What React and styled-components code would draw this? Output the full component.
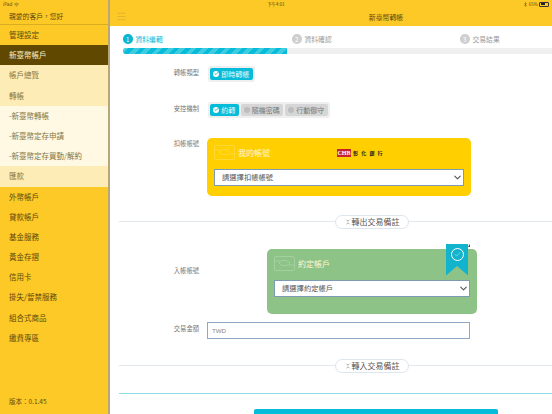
import React from 'react';
import styled, { createGlobalStyle } from 'styled-components';
import { Check, ChevronDown, Menu, Wifi, Bluetooth, ChevronsDownUp } from 'lucide-react';

const Global = createGlobalStyle`
  html, body { margin: 0; padding: 0; background: #fff; }
  * { box-sizing: border-box; }
  body {
    font-family: "Noto Sans CJK TC", "Noto Sans", sans-serif;
    color: #666;
    overflow: hidden;
  }
`;

const Page = styled.div`
  position: relative;
  display: flex;
  width: 552px;
  height: 414px;
  overflow: hidden;
`;

const StatusBar = styled.div`
  position: absolute;
  top: 0;
  left: 0;
  right: 0;
  height: 8px;
  padding: 0 3px;
  display: grid;
  grid-template-columns: 1fr auto 1fr;
  align-items: center;
  font-size: 4.5px;
  line-height: 8px;
  color: #5d4a10;
`;

const StatusLeft = styled.div`
  display: flex;
  align-items: center;
  gap: 2px;
`;

const StatusRight = styled.div`
  display: flex;
  align-items: center;
  justify-content: flex-end;
  gap: 1px;
`;

const Battery = styled.span`
  width: 10px;
  height: 5px;
  border: 0.5px solid #333;
  border-radius: 1px;
  padding: 0.5px;
  display: block;

  &::before {
    content: '';
    display: block;
    width: 65%;
    height: 100%;
    background: #222;
  }
`;

const Sidebar = styled.aside`
  width: 110px;
  flex: none;
  display: flex;
  flex-direction: column;
  padding-top: 8px;
  background: #fdc926;
  border-right: 2px solid #b9a77a;
`;

const Greeting = styled.div`
  height: 17px;
  padding-left: 9px;
  font-size: 6.8px;
  line-height: 16px;
  color: #5d4a10;
  border-bottom: 1px solid #d9ac22;
`;

const NavItem = styled.div`
  height: 20.2px;
  flex: none;
  padding-left: 9px;
  font-size: 7.5px;
  line-height: 20px;
  white-space: nowrap;
  color: ${(p) => (p.$level === 'active' ? '#fdf1cf' : p.$level === 'top' ? '#5d4a10' : '#85763f')};
  background: ${(p) =>
    p.$level === 'active' ? '#614800' : p.$level === 'open' ? '#feecb6' : p.$level === 'sub' ? '#fff8e3' : 'transparent'};
`;

const Version = styled.div`
  margin-top: auto;
  padding: 0 0 8px 9px;
  font-size: 6.5px;
  line-height: 10px;
  color: #5d4a10;
`;

const Main = styled.main`
  flex: 1;
  min-width: 0;
  display: flex;
  flex-direction: column;

  & > * {
    flex: none;
  }
`;

const Header = styled.header`
  position: relative;
  height: 26px;
  padding: 8px 0 0 110px;
  display: flex;
  align-items: center;
  justify-content: center;
  background: #fdc926;
  font-size: 6.9px;
  color: #5d4a10;
`;

const MenuButton = styled.span`
  position: absolute;
  left: 6px;
  top: 11px;
  display: flex;
  color: #c9a341;
`;

const Steps = styled.div`
  margin: 8px 0 0 13px;
  height: 10px;
  display: grid;
  grid-template-columns: 169px 168px 1fr;
`;

const Step = styled.div`
  display: flex;
  align-items: center;
  gap: 3px;
  font-size: 6.8px;
  color: ${(p) => (p.$active ? '#08b6d4' : '#9a9a9a')};
`;

const StepNumber = styled.span`
  width: 9.5px;
  height: 9.5px;
  border-radius: 50%;
  display: flex;
  align-items: center;
  justify-content: center;
  font-size: 6px;
  color: #fff;
  background: ${(p) => (p.$active ? '#08b6d4' : '#cfcfcf')};
`;

const Progress = styled.div`
  margin: 4px 0 0 13px;
  height: 5.5px;
  display: flex;
  background: #f0f0f0;
`;

const ProgressFill = styled.div`
  width: 164px;
  border-radius: 3px 0 0 3px;
  background: repeating-linear-gradient(-45deg, #06bcd8 0 4px, #3fcbe0 4px 8px);
`;

const Form = styled.div`
  margin-top: ${(p) => p.$top}px;
  padding-left: 9px;
  display: flex;
  flex-direction: column;
`;

const Row = styled.div`
  display: grid;
  grid-template-columns: 80px 1fr;
  column-gap: 8px;
  margin-top: ${(p) => p.$top || 0}px;
`;

const Label = styled.div`
  padding-top: ${(p) => p.$pad}px;
  text-align: right;
  font-size: 6.3px;
  line-height: 9px;
  color: #777;
`;

const PillGroup = styled.div`
  justify-self: start;
  display: flex;
  gap: 2px;
  height: 16px;
  margin-left: 1px;
  padding: 2px;
  border-radius: 3px;
  background: #efefef;
`;

const Pill = styled.div`
  display: flex;
  align-items: center;
  gap: 2px;
  height: 12.5px;
  padding: 0 3.25px;
  border-radius: 2px;
  font-size: 7px;
  white-space: nowrap;
  color: ${(p) => (p.$on ? '#e4f9fd' : '#777')};
  background: ${(p) => (p.$on ? '#06bcd8' : '#d6d6d6')};
`;

const Dot = styled.span`
  width: 6px;
  height: 6px;
  flex: none;
  border-radius: 50%;
  display: flex;
  align-items: center;
  justify-content: center;
  color: #06a7c4;
  background: ${(p) => (p.$on ? '#fff' : '#bdbdbd')};
`;

const Card = styled.div`
  position: relative;
  width: ${(p) => p.$width}px;
  height: ${(p) => p.$height}px;
  margin-left: ${(p) => p.$left || 0}px;
  padding: 7px 7px 0;
  border-radius: 5px;
  background: ${(p) => p.$bg};
`;

const CardHead = styled.div`
  display: flex;
  align-items: center;
  gap: 3px;
  height: 16px;
  margin-bottom: 8px;
  font-size: 8px;
  color: #fff6d8;
`;

const BankLogo = styled.div`
  margin-left: 64px;
  display: flex;
  align-items: center;
  gap: 2px;
`;

const BankMark = styled.span`
  width: 14px;
  height: 8px;
  display: flex;
  align-items: center;
  justify-content: center;
  font: 700 6px "Liberation Serif", serif;
  color: #fff;
  background: #c8222c;
`;

const BankName = styled.span`
  font-size: 5px;
  letter-spacing: 3.2px;
  font-weight: 700;
  color: #222;
`;

const SelectWrap = styled.div`
  position: relative;
  display: flex;
  color: #555;

  svg {
    position: absolute;
    right: 1px;
    top: 3px;
    pointer-events: none;
  }
`;

const Select = styled.select`
  appearance: none;
  width: 100%;
  height: 17px;
  padding: 0 7px;
  border: 1px solid #7f9bb3;
  border-radius: 0;
  background: #fff;
  font-family: inherit;
  font-size: 7.3px;
  color: #555;
`;

const Bookmark = styled.div`
  position: absolute;
  top: -5px;
  right: 9px;
  width: 22px;
  height: 32px;
  display: flex;
  justify-content: center;
  padding-top: 4px;
  color: #fff;
  background: #12b3cd;
  clip-path: polygon(0 0, 100% 0, 100% 100%, 50% 70%, 0 100%);
`;

const BookmarkFold = styled.span`
  position: absolute;
  top: -5px;
  right: 7px;
  width: 0;
  height: 0;
  border-style: solid;
  border-width: 0 0 3px 2px;
  border-color: transparent transparent #1d4a63 transparent;
`;

const BookmarkRing = styled.span`
  width: 13px;
  height: 13px;
  border: 0.7px solid #fff;
  border-radius: 50%;
  display: flex;
  align-items: center;
  justify-content: center;
`;

const Amount = styled.input`
  width: 263px;
  height: 17px;
  padding: 0 4px;
  border: 1px solid #8fa9c4;
  background: #fff;
  font-family: "Liberation Sans", sans-serif;
  font-size: 6.2px;
  outline: none;

  &::placeholder {
    color: #888;
  }
`;

const Divider = styled.div`
  display: flex;
  align-items: center;
  margin-top: ${(p) => p.$top}px;
  margin-left: 9px;
`;

const Line = styled.span`
  height: 1px;
  flex: ${(p) => (p.$left ? '0 0 216px' : '1')};
  background: #e3e8ee;
`;

const NotePill = styled.div`
  width: 74px;
  height: 14px;
  flex: none;
  border: 1px solid #dde5ee;
  border-radius: 7px;
  display: flex;
  align-items: center;
  justify-content: center;
  gap: 1px;
  font-size: 8px;
  color: #555;
  background: #fff;
`;

const BottomRule = styled.div`
  height: 1.5px;
  margin: 20px 0 0 9px;
  background: #8adbe6;
`;

const Submit = styled.button`
  width: 244px;
  height: 20px;
  margin: 15px 0 0 144px;
  border: none;
  border-radius: 2px 2px 0 0;
  background: #06bcd8;
`;

const CardIcon = () => (
  <svg width="21" height="15" viewBox="0 0 21 15" fill="none" stroke="#fff" strokeOpacity="0.35" strokeWidth="0.6">
    <rect x="0.5" y="0.5" width="20" height="14" rx="1.5" />
    <ellipse cx="10.5" cy="7" rx="5" ry="2.5" />
    <path d="M0.5 5H6M15 9H20.5" />
  </svg>
);

const subMenu = ['-新臺幣轉帳', '-新臺幣定存申請', '-新臺幣定存買動/解約'];
const lowerMenu = ['外幣帳戶', '貸款帳戶', '基金服務', '黃金存摺', '信用卡', '掛失/暫禁服務', '組合式商品', '繳費專區'];

export default function App() {
  return (
    <Page>
      <Global />
      <Sidebar>
        <Greeting>親愛的客戶，您好</Greeting>
        <NavItem $level="top">管理設定</NavItem>
        <NavItem $level="active">新臺幣帳戶</NavItem>
        <NavItem $level="open">帳戶總覽</NavItem>
        <NavItem $level="open">轉帳</NavItem>
        {subMenu.map((item) => (
          <NavItem key={item} $level="sub">{item}</NavItem>
        ))}
        <NavItem $level="open">匯款</NavItem>
        {lowerMenu.map((item) => (
          <NavItem key={item} $level="top">{item}</NavItem>
        ))}
        <Version>版本：0.1.45</Version>
      </Sidebar>

      <Main>
        <Header>
          <MenuButton><Menu size={11} strokeWidth={1.2} /></MenuButton>
          新臺幣轉帳
        </Header>
        <Steps>
          <Step $active><StepNumber $active>1</StepNumber>資料編輯</Step>
          <Step><StepNumber>2</StepNumber>資料確認</Step>
          <Step><StepNumber>3</StepNumber>交易結果</Step>
        </Steps>
        <Progress><ProgressFill /></Progress>

        <Form $top={12}>
          <Row>
            <Label $pad={2}>轉帳類型</Label>
            <PillGroup>
              <Pill $on><Dot $on><Check size={5} strokeWidth={4} /></Dot>即時轉帳</Pill>
            </PillGroup>
          </Row>
          <Row $top={20}>
            <Label $pad={2.5}>安控機制</Label>
            <PillGroup>
              <Pill $on><Dot $on><Check size={5} strokeWidth={4} /></Dot>約轉</Pill>
              <Pill><Dot />隨機密碼</Pill>
              <Pill><Dot />行動御守</Pill>
            </PillGroup>
          </Row>
          <Row $top={20}>
            <Label $pad={1.5}>扣帳帳號</Label>
            <Card $width={264} $height={58} $bg="#ffcf00">
              <CardHead>
                <CardIcon />
                我的帳號
                <BankLogo>
                  <BankMark>CHB</BankMark>
                  <BankName>彰化銀行</BankName>
                </BankLogo>
              </CardHead>
              <SelectWrap>
                <Select defaultValue="">
                  <option value="">請選擇扣帳帳號</option>
                </Select>
                <ChevronDown size={11} strokeWidth={2.4} />
              </SelectWrap>
            </Card>
          </Row>
        </Form>

        <Divider $top={19}>
          <Line $left />
          <NotePill><ChevronsDownUp size={6} />轉出交易備註</NotePill>
          <Line />
        </Divider>

        <Form $top={20}>
          <Row>
            <Label $pad={17.5}>入帳帳號</Label>
            <Card $width={210} $height={65} $left={60} $bg="#8dc386">
              <BookmarkFold />
              <Bookmark>
                <BookmarkRing><Check size={7} strokeWidth={1.5} /></BookmarkRing>
              </Bookmark>
              <CardHead>
                <CardIcon />
                約定帳戶
              </CardHead>
              <SelectWrap>
                <Select defaultValue="">
                  <option value="">請選擇約定帳戶</option>
                </Select>
                <ChevronDown size={11} strokeWidth={2.4} />
              </SelectWrap>
            </Card>
          </Row>
          <Row $top={8}>
            <Label $pad={2.5}>交易金額</Label>
            <Amount placeholder="TWD" readOnly />
          </Row>
        </Form>

        <Divider $top={20}>
          <Line $left />
          <NotePill><ChevronsDownUp size={6} />轉入交易備註</NotePill>
          <Line />
        </Divider>

        <BottomRule />
        <Submit />
      </Main>

      <StatusBar>
        <StatusLeft>iPad <Wifi size={5} /></StatusLeft>
        <span>下午4:01</span>
        <StatusRight><Bluetooth size={5} />65%<Battery /></StatusRight>
      </StatusBar>
    </Page>
  );
}
